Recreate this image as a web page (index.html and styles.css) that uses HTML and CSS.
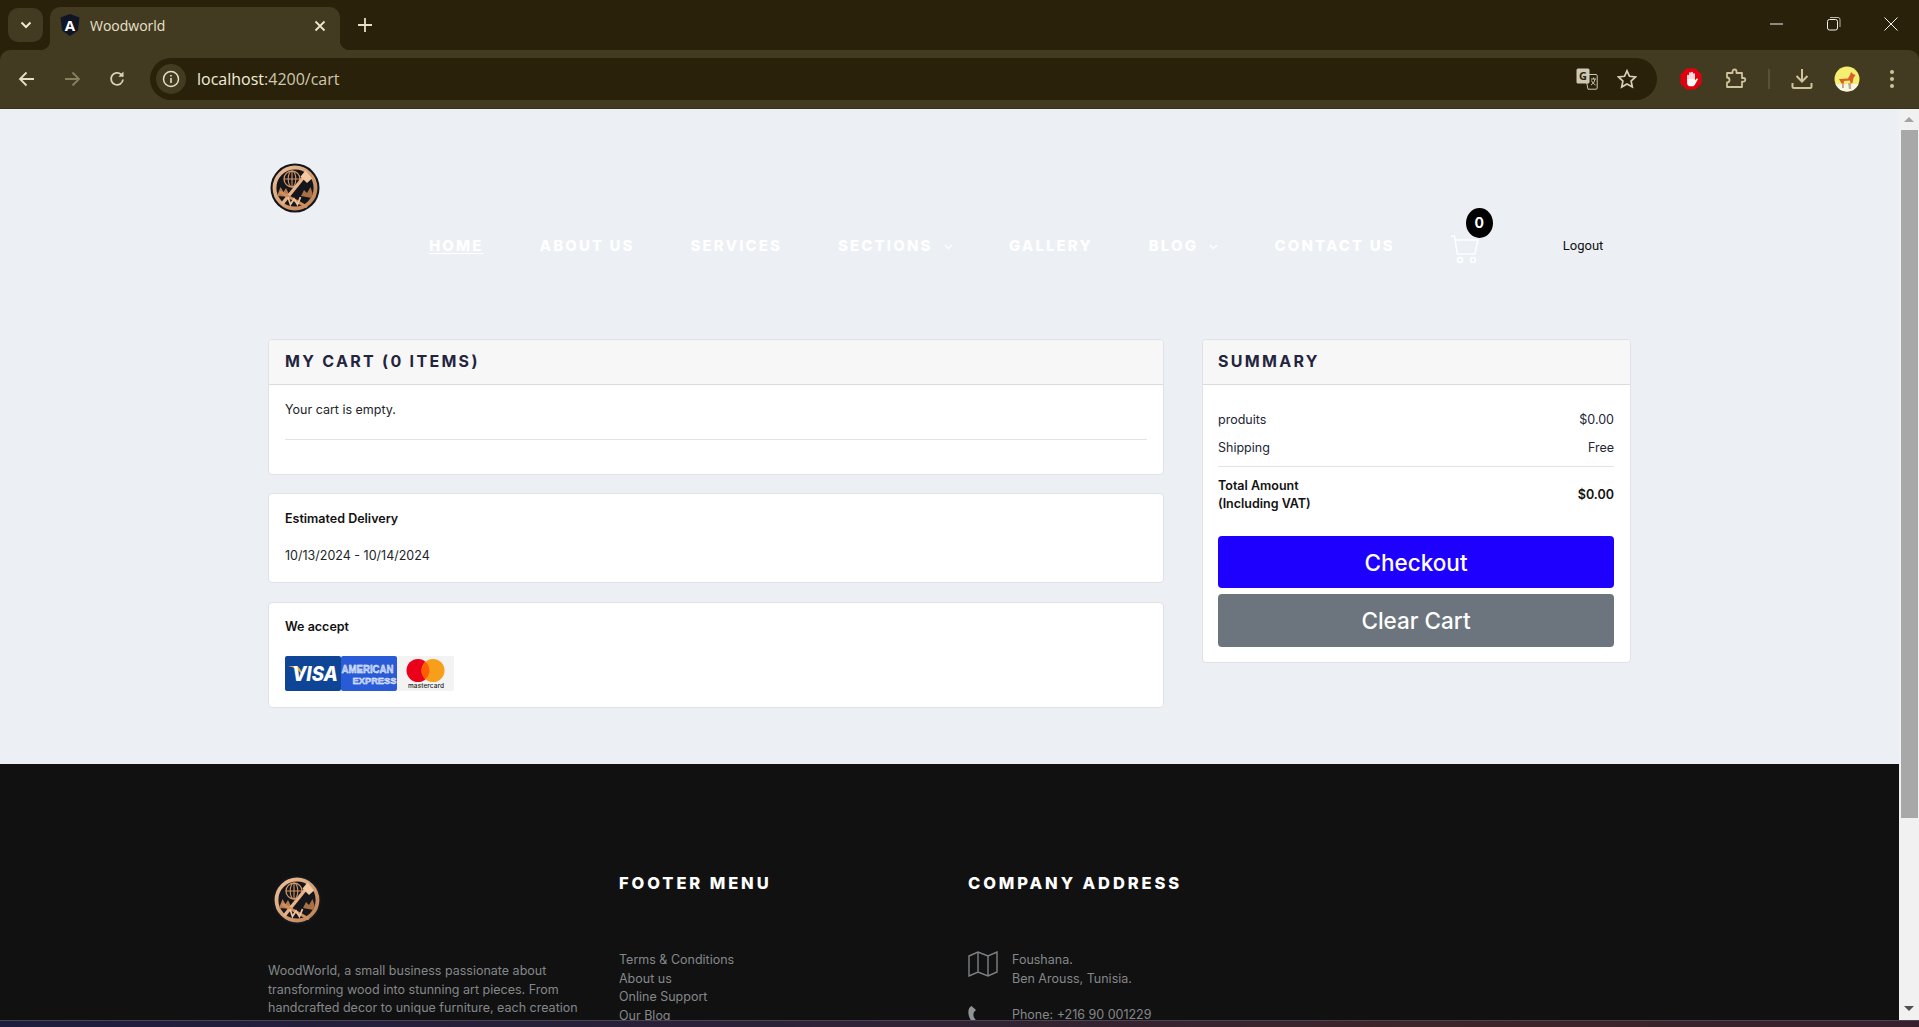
FILE: index.html
```html
<!DOCTYPE html>
<html lang="en">
	<head>
		<meta charset="UTF-8">
		<title>Woodworld</title>
		<link rel="stylesheet" href="styles.css">
	</head>
	<body>
		<svg class="defs" width="0" height="0">
			<defs>
				<linearGradient id="copper" x1="0" y1="0" x2="1" y2="1">
					<stop offset="0" stop-color="#eec29a"/>
					<stop offset="1" stop-color="#bd8052"/>
				</linearGradient>
			</defs>
			<symbol id="logo" viewBox="0 0 50 50">
				<circle cx="25" cy="25" r="24.500" fill="#15151c"/>
				<circle cx="25" cy="25" r="20.500" fill="none" stroke="url(#copper)" stroke-width="3.800"/>
				<circle cx="22" cy="16" r="8" fill="none" stroke="#cf9566" stroke-width="1.300"/>
				<ellipse cx="22" cy="16" rx="3.800" ry="8" fill="none" stroke="#cf9566" stroke-width="1.100"/>
				<path d="M14 16h16M22 8v16" stroke="#cf9566" stroke-width="1.100"/>
				<path d="M7 33l3.500-9 3 5 2.500-4 3 6 1 3z" fill="#b67c50"/>
				<path d="M31 33l3-6 3 3 3.500-6 2 6-1 5z" fill="#a96f45"/>
				<path d="M12 41L33 15" stroke="#e8b288" stroke-width="3.400"/>
				<path d="M30.500 13.500l5-6 6.500 8-5 4.500z" fill="#f2c9a3"/>
				<path d="M10 29l27 15" stroke="#cf9060" stroke-width="3"/>
				<path d="M18 34l2.500 7.500 3.500-5.500 3.500 5.500 3-7.500" fill="none" stroke="#f0c098" stroke-width="1.800"/>
			</symbol>
		</svg>

		<!-- barre du navigateur -->
		<div class="tabstrip">
			<div class="tab-menu">
				<svg width="12" height="8" viewBox="0 0 12 8"><path d="M1.500 1.500L6 6l4.500-4.500" fill="none" stroke="#eee6cf" stroke-width="2"/></svg>
			</div>
			<div class="tab">
				<svg class="favicon" width="20" height="22" viewBox="0 0 20 22">
					<path d="M10 0l9.500 3.400-1.500 13L10 22l-8-5.600L.5 3.400z" fill="#0f1524"/>
					<text x="10" y="16.500" text-anchor="middle" class="favicon-letter">A</text>
				</svg>
				<span class="tab-title">Woodworld</span>
				<svg class="tab-close" width="12" height="12" viewBox="0 0 12 12"><path d="M1.500 1.500l9 9M10.500 1.500l-9 9" stroke="#eee6cf" stroke-width="1.800"/></svg>
			</div>
			<svg class="tab-new" width="14" height="14" viewBox="0 0 14 14"><path d="M7 0v14M0 7h14" stroke="#e6dfc6" stroke-width="1.800"/></svg>
			<div class="window-btns">
				<svg width="14" height="14" viewBox="0 0 14 14"><path d="M0 7h13" stroke="#f2f2f2" stroke-width="1"/></svg>
				<svg width="14" height="14" viewBox="0 0 14 14"><rect x=".5" y="2.500" width="10" height="10.500" rx="2" fill="none" stroke="#f2f2f2"/><path d="M3 .5h8a2 2 0 0 1 2 2V10" fill="none" stroke="#bdb8a6"/></svg>
				<svg width="14" height="14" viewBox="0 0 14 14"><path d="M.5.5l13 13M13.500.5l-13 13" stroke="#f2f2f2" stroke-width="1"/></svg>
			</div>
		</div>
		<div class="toolbar">
			<svg class="tool-btn" width="18" height="16" viewBox="0 0 18 16"><path d="M16 8H2M8.500 1.500L2 8l6.500 6.500" fill="none" stroke="#e6dfc6" stroke-width="1.800"/></svg>
			<svg class="tool-btn" width="18" height="16" viewBox="0 0 18 16"><path d="M2 8h14M9.500 1.500L16 8l-6.500 6.500" fill="none" stroke="#86805f" stroke-width="1.800"/></svg>
			<svg class="tool-btn" width="18" height="18" viewBox="0 0 18 18"><path d="M15 9.500a6 6 0 1 1-1.800-5L15 6" fill="none" stroke="#d8d1b6" stroke-width="1.800"/><path d="M15.500 1.500v5.200h-5.200z" fill="#d8d1b6"/></svg>
			<div class="omnibox">
				<div class="site-chip">
					<svg width="18" height="18" viewBox="0 0 18 18"><circle cx="9" cy="9" r="7.500" fill="none" stroke="#e6dfc6" stroke-width="1.500"/><path d="M9 8v5M9 5v1.600" stroke="#e6dfc6" stroke-width="1.600"/></svg>
				</div>
				<span class="url"><span class="url-host">localhost</span>:4200/cart</span>
				<svg class="omni-translate" width="22" height="22" viewBox="0 0 22 22">
					<path d="M9 6.500h11a1.200 1.200 0 0 1 1.200 1.200V20a1.200 1.200 0 0 1-1.200 1.200H12L9 6.500z" fill="#292109" stroke="#cfc8b2"/>
					<rect x="0.500" y="0.500" width="13" height="15" rx="1.500" fill="#cfc8b2"/>
					<text x="7" y="12" text-anchor="middle" class="translate-letter">G</text>
					<path d="M15 11h5M17.500 9.500V11M19 11c-.5 3-2 5-4 6M15.500 12.500c1 2 2 3.500 4 4.500" fill="none" stroke="#cfc8b2"/>
				</svg>
				<svg class="omni-star" width="20" height="20" viewBox="0 0 20 20"><path d="M10 1.800l2.500 5.500 6 .7-4.400 4 1.200 5.900L10 15l-5.300 3 1.200-6-4.400-4 6-.7z" fill="none" stroke="#d8d1b6" stroke-width="1.700"/></svg>
			</div>
			<div class="ext-icons">
				<svg class="ext-block" width="22" height="22" viewBox="0 0 22 22">
					<path d="M6.500.5h9l6 6v9l-6 6h-9l-6-6v-9z" fill="#e3000f"/>
					<path d="M8 7.500V12M10 5v6M12 4.500V11M14 6v6" stroke="#fff" stroke-width="1.700" stroke-linecap="round"/>
					<path d="M7.100 11h7.800v1.500l1.500-1.700c.7-.7 1.800 0 1.300.9l-3 5.300c-.6.900-1.300 1.300-2.400 1.300h-2.300c-1.800 0-2.900-1.300-2.900-3.200z" fill="#fff"/>
				</svg>
				<svg width="22" height="22" viewBox="0 0 22 22"><path d="M2 5h5.500V3.500a2 2 0 0 1 4 0V5H17v5h1.500a1.800 1.800 0 0 1 0 3.600H17V19H2v-4.500a2.500 2.500 0 0 0 0-5z" fill="none" stroke="#cfc39c" stroke-width="1.800" stroke-linejoin="round"/></svg>
				<span class="tool-sep"></span>
				<svg width="22" height="22" viewBox="0 0 22 22"><path d="M11 1v12M5.500 8l5.500 5.500L16.500 8M1.500 15v3.500a1.500 1.500 0 0 0 1.500 1.500h16a1.500 1.500 0 0 0 1.500-1.500V15" fill="none" stroke="#cfc39c" stroke-width="2"/></svg>
				<svg width="26" height="26" viewBox="0 0 26 26">
					<circle cx="13" cy="13" r="12.500" fill="#f5ee71"/>
					<path d="M1.500 18h23a12.500 12.500 0 0 1-23 0z" fill="#f7f5e4"/>
					<path d="M5 13l9-.5 2-3.500 1-3 2 2 2.500 1-2 3-1 5-2 .5-.5-3-6 .5-.5 3-2-.5z" fill="#d8612a"/>
					<path d="M14 17h3v6h-2zM8 18h2v4H8z" fill="#c8a887"/>
				</svg>
				<svg class="ext-menu" width="6" height="20" viewBox="0 0 6 20"><circle cx="3" cy="3" r="2" fill="#cfc39c"/><circle cx="3" cy="10" r="2" fill="#cfc39c"/><circle cx="3" cy="17" r="2" fill="#cfc39c"/></svg>
			</div>
		</div>

		<div class="viewport">
			<div class="page">
				<header class="site-head">
					<svg class="logo" width="50" height="50"><use href="#logo"/></svg>
					<nav class="nav">
						<a class="nav-link current">HOME</a>
						<a class="nav-link">ABOUT US</a>
						<a class="nav-link">SERVICES</a>
						<a class="nav-link">SECTIONS
							<svg class="chev" width="9" height="6" viewBox="0 0 9 6"><path d="M1 1l3.500 3.500L8 1" fill="none" stroke="#fff" stroke-width="1.400"/></svg>
						</a>
						<a class="nav-link">GALLERY</a>
						<a class="nav-link">BLOG
							<svg class="chev" width="9" height="6" viewBox="0 0 9 6"><path d="M1 1l3.500 3.500L8 1" fill="none" stroke="#fff" stroke-width="1.400"/></svg>
						</a>
						<a class="nav-link">CONTACT US</a>
						<div class="cart-link">
							<svg width="29" height="28" viewBox="0 0 29 28">
								<path d="M0 1h3.500l2.800 18h17.500L27 5H4" fill="none" stroke="#fff" stroke-width="1.500"/>
								<circle cx="9" cy="25" r="2.500" fill="none" stroke="#fff" stroke-width="1.500"/>
								<circle cx="22" cy="25" r="2.500" fill="none" stroke="#fff" stroke-width="1.500"/>
							</svg>
							<span class="cart-badge">0</span>
						</div>
						<a class="logout">Logout</a>
					</nav>
				</header>

				<main class="cart-page">
					<div class="col">
						<section class="card">
							<h2 class="card-head">MY CART (0 ITEMS)</h2>
							<div class="card-body cart-items">
								<p>Your cart is empty.</p>
								<hr class="line">
							</div>
						</section>
						<section class="card delivery">
							<h3>Estimated Delivery</h3>
							<p>10/13/2024 - 10/14/2024</p>
						</section>
						<section class="card accept">
							<h3>We accept</h3>
							<div class="pay-cards">
								<svg width="56" height="35" viewBox="0 0 56 35">
									<rect width="56" height="35" rx="2" fill="#0f4596"/>
									<path d="M3 10h8q5 1 6 9q-4-7-14-9z" fill="#f0ae2e"/>
									<text x="7" y="25" class="visa-text" textLength="46" lengthAdjust="spacingAndGlyphs">VISA</text>
								</svg>
								<svg width="56" height="35" viewBox="0 0 56 35">
									<rect width="56" height="35" rx="2" fill="#2a5bd7"/>
									<text x="0.500" y="16.500" class="amex-text" textLength="52" lengthAdjust="spacingAndGlyphs">AMERICAN</text>
									<text x="11.500" y="27.500" class="amex-text amex-small" textLength="44" lengthAdjust="spacingAndGlyphs">EXPRESS</text>
								</svg>
								<svg width="57" height="35" viewBox="0 0 57 35">
									<rect width="57" height="35" rx="2" fill="#f3f3f3"/>
									<circle cx="21" cy="14.500" r="11.500" fill="#eb001b"/>
									<circle cx="36" cy="14.500" r="11.500" fill="#f79e1b"/>
									<path d="M28.500 5.800a11.500 11.500 0 0 1 0 17.400a11.500 11.500 0 0 1 0-17.400z" fill="#ff5f00"/>
									<text x="11" y="32" class="mc-text" textLength="36">mastercard</text>
								</svg>
							</div>
						</section>
					</div>
					<aside class="card summary">
						<h2 class="card-head">SUMMARY</h2>
						<div class="card-body summary-body">
							<div class="sum-row"><span>produits</span><span>$0.00</span></div>
							<div class="sum-row"><span>Shipping</span><span>Free</span></div>
							<hr class="line">
							<div class="sum-row total">
								<span>Total Amount<br>(Including VAT)</span>
								<span>$0.00</span>
							</div>
							<button class="btn btn-blue">Checkout</button>
							<button class="btn btn-grey">Clear Cart</button>
						</div>
					</aside>
				</main>

				<footer class="site-foot">
					<div class="foot-inner">
						<div class="foot-about">
							<svg class="foot-logo" width="50" height="50"><use href="#logo"/></svg>
							<p>WoodWorld, a small business passionate about transforming wood into stunning art pieces. From handcrafted decor to unique furniture, each creation tells a story.</p>
						</div>
						<div class="foot-menu">
							<h4>FOOTER MENU</h4>
							<ul>
								<li>Terms &amp; Conditions</li>
								<li>About us</li>
								<li>Online Support</li>
								<li>Our Blog</li>
							</ul>
						</div>
						<div class="foot-address">
							<h4>COMPANY ADDRESS</h4>
							<div class="addr-row">
								<svg width="30" height="26" viewBox="0 0 30 26"><path d="M1 5l9-4 10 4 9-4v20l-9 4-10-4-9 4zM10 1v20M20 5v20" fill="none" stroke="#7d8285" stroke-width="1.400"/></svg>
								<span>Foushana.<br>Ben Arouss, Tunisia.</span>
							</div>
							<div class="addr-row">
								<svg width="30" height="26" viewBox="0 0 30 26"><path d="M3.500 0C1 1 0 4 .5 8s3 8 6 10l2-3-2.500-3.500c-.8-2-.8-3.500 0-5.500l2-2z" fill="#8f9496"/></svg>
								<span>Phone: +216 90 001229</span>
							</div>
						</div>
					</div>
				</footer>
			</div>
			<div class="scrollbar">
				<span class="sb-up"></span>
				<span class="sb-thumb"></span>
				<span class="sb-down"></span>
			</div>
		</div>
		<div class="taskbar-edge"></div>
	</body>
</html>
```

FILE: styles.css
```css
* {
	margin: 0;
	padding: 0;
	box-sizing: border-box;
}
html, body {
	height: 100%;
	overflow: hidden;
}
body {
	display: flex;
	flex-direction: column;
	font-family: "Inter", "Liberation Sans", sans-serif;
	font-size: 12.500px;
	color: #212529;
	background: #292109;
}
.defs {
	position: absolute;
}

/* browser */
.tabstrip {
	height: 50px;
	flex: none;
	display: flex;
	align-items: flex-start;
	background: #292109;
	font-family: "Open Sans", "Liberation Sans", sans-serif;
}
.tab-menu {
	width: 35px;
	height: 34px;
	margin: 8px 0 0 8px;
	background: #423a21;
	border-radius: 10px;
	display: flex;
	align-items: center;
	justify-content: center;
}
.tab {
	width: 290px;
	height: 43px;
	margin: 7px 0 0 7px;
	padding: 0 14px 0 10px;
	background: #423a21;
	border-radius: 10px 10px 0 0;
	display: flex;
	align-items: center;
	position: relative;
}
.tab::before, .tab::after {
	content: "";
	position: absolute;
	bottom: 0;
	width: 10px;
	height: 10px;
}
.tab::before {
	left: -10px;
	background: radial-gradient(circle at 0 0, transparent 10px, #423a21 10.500px);
}
.tab::after {
	right: -10px;
	background: radial-gradient(circle at 100% 0, transparent 10px, #423a21 10.500px);
}
.favicon {
	margin-top: -8px;
}
.favicon-letter {
	font: 700 15px "Open Sans", sans-serif;
	fill: #fff;
}
.translate-letter {
	font: 700 11px "Open Sans", sans-serif;
	fill: #292109;
}
.tab-title {
	margin: -6px 0 0 10px;
	flex: 1;
	font-size: 14px;
	color: #e8e2cc;
}
.tab-close {
	margin: -6px 0 0 0;
}
.tab-new {
	margin: 18px 0 0 18px;
}
.window-btns {
	margin: 17px 21px 0 auto;
	display: flex;
	gap: 43px;
}
.toolbar {
	height: 59px;
	flex: none;
	display: flex;
	align-items: center;
	background: #423a21;
	border-radius: 10px 10px 0 0;
	border-bottom: 1px solid #3a3322;
	position: relative;
	padding-left: 18px;
	font-family: "Open Sans", "Liberation Sans", sans-serif;
}
.tool-btn {
	margin-right: 27px;
	flex: none;
}
.tool-btn:nth-child(3) {
	margin-right: 24px;
}
.omnibox {
	width: 1507px;
	height: 42px;
	flex: none;
	margin-top: -1px;
	background: #292109;
	border-radius: 21px;
	display: flex;
	align-items: center;
	padding-left: 6px;
}
.site-chip {
	width: 30px;
	height: 30px;
	border-radius: 50%;
	background: #423a21;
	display: flex;
	align-items: center;
	justify-content: center;
}
.url {
	margin-left: 11px;
	font-size: 16px;
	color: #cfc8ac;
	flex: 1;
}
.url-host {
	color: #f2edda;
}
.omni-translate {
	margin-right: 19px;
}
.omni-star {
	margin-right: 20px;
}
.ext-icons {
	display: flex;
	align-items: center;
	margin-left: 23px;
	gap: 21px;
}
.ext-block {
	margin-right: 2px;
}
.ext-menu {
	margin-left: 8px;
}
.tool-sep {
	width: 2px;
	height: 20px;
	background: #5b5234;
}

/* page */
.viewport {
	flex: 1;
	min-height: 0;
	display: flex;
}
.page {
	flex: 1;
	min-width: 0;
	overflow: hidden;
	background: #eceff4;
}
.scrollbar {
	width: 20px;
	flex: none;
	background: #f1f1f1;
	display: flex;
	flex-direction: column;
	align-items: center;
}
.sb-up {
	width: 0;
	height: 0;
	margin-top: 8px;
	border: 5px solid transparent;
	border-top: 0;
	border-bottom-color: #a3a3a3;
}
.sb-thumb {
	width: 17px;
	height: 688px;
	margin: 8px 0 0 1px;
	background: #a8a8a8;
}
.sb-down {
	width: 0;
	height: 0;
	margin-top: 188px;
	border: 5px solid transparent;
	border-bottom: 0;
	border-top-color: #505050;
}
.taskbar-edge {
	height: 7px;
	flex: none;
	border-top: 1px solid #4b4452;
	background: linear-gradient(90deg, #1d1d3d 0%, #2c2238 40%, #3e2528 75%, #37202c 100%);
}
.site-head {
	width: 1363px;
	margin: 0 auto;
	padding-top: 54px;
}
.logo {
	display: block;
	margin-left: 2px;
}
.nav {
	height: 40px;
	margin-top: 12px;
	padding-left: 161px;
	display: flex;
	align-items: center;
	gap: 56px;
}
.nav-link {
	font-size: 15px;
	font-weight: 800;
	letter-spacing: 2.100px;
	color: #fff;
	white-space: nowrap;
}
.nav-link.current {
	text-decoration: underline;
	text-decoration-thickness: 1px;
	text-underline-offset: 2px;
}
.chev {
	margin-left: 6px;
	vertical-align: 1px;
}
.cart-link {
	position: relative;
	width: 29px;
	height: 28px;
	margin: 8px 0 0 0;
}
.cart-badge {
	position: absolute;
	left: 15px;
	top: -27px;
	width: 27px;
	height: 30px;
	border-radius: 50%;
	background: #000;
	color: #fff;
	font-size: 14px;
	font-weight: 700;
	line-height: 30px;
	text-align: center;
}
.logout {
	margin-left: 27px;
	font-family: "Roboto", "Inter", sans-serif;
	font-size: 13px;
	color: #111;
}
.cart-page {
	width: 1363px;
	margin: 0 auto;
	padding-top: 74px;
	display: flex;
	gap: 38px;
	align-items: flex-start;
}
.col {
	width: 896px;
	flex: none;
	display: flex;
	flex-direction: column;
	gap: 18px;
}
.card {
	background: #fff;
	border: 1px solid #dfe1e6;
	border-radius: 4px;
}
.card-head {
	height: 45px;
	padding: 0 16px;
	background: #f7f7f8;
	border-bottom: 1px solid #dadbdf;
	border-radius: 4px 4px 0 0;
	font-size: 16px;
	font-weight: 700;
	letter-spacing: 2.300px;
	line-height: 43px;
	color: #24243e;
}
.card-body {
	padding: 0 16px;
}
.cart-items {
	height: 89px;
	padding-top: 16px;
}
.cart-items p {
	line-height: 18px;
}
.line {
	border: 0;
	border-top: 1px solid #e2e3e6;
}
.cart-items .line {
	margin-top: 20px;
}
.delivery {
	height: 90px;
	padding: 16px;
}
.delivery h3, .accept h3 {
	font-size: 12.500px;
	font-weight: 600;
	line-height: 18px;
	color: #111;
}
.delivery p {
	margin-top: 19px;
	line-height: 18px;
}
.accept {
	height: 106px;
	margin-top: 1px;
	padding: 15px 16px;
}
.pay-cards {
	margin-top: 20px;
	display: flex;
}
.visa-text {
	font: italic 800 20px "Inter", sans-serif;
	fill: #fff;
}
.amex-text {
	font: 700 10px "Liberation Sans", sans-serif;
	fill: #9db8f3;
	stroke: #fff;
	stroke-width: .4px;
}
.amex-small {
	font-size: 9.500px;
}
.mc-text {
	font: 500 6.500px "Inter", sans-serif;
	fill: #222;
}
.summary {
	width: 429px;
	flex: none;
	height: 324px;
}
.summary .card-head {
	padding-left: 15px;
}
.summary-body {
	padding: 20px 16px 0 15px;
}
.sum-row {
	display: flex;
	justify-content: space-between;
	align-items: center;
	height: 28px;
	color: #212535;
}
.summary-body .line {
	margin-top: 5px;
}
.sum-row.total {
	height: 50px;
	margin-top: 3px;
	font-weight: 600;
	line-height: 18px;
	color: #111;
}
.btn {
	display: block;
	width: 100%;
	border: 0;
	border-radius: 4px;
	color: #fff;
	font-family: "Inter", sans-serif;
	font-size: 22.500px;
	font-weight: 500;
}
.btn-blue {
	height: 52px;
	margin-top: 16px;
	background: #1e00ff;
}
.btn-grey {
	height: 53px;
	margin-top: 6px;
	background: #6c757d;
}
.site-foot {
	margin-top: 56px;
	height: 400px;
	background: #111;
	color: #84888b;
}
.foot-inner {
	width: 1363px;
	margin: 0 auto;
	padding-top: 111px;
	display: flex;
}
.foot-about {
	width: 351px;
	flex: none;
}
.foot-logo {
	display: block;
	margin-left: 4px;
}
.foot-about p {
	width: 320px;
	margin-top: 37px;
	line-height: 18.500px;
}
.foot-menu {
	width: 349px;
	flex: none;
}
.site-foot h4 {
	margin-top: -2px;
	font-size: 16.500px;
	font-weight: 800;
	letter-spacing: 2.900px;
	line-height: 20px;
	color: #fff;
}
.foot-menu ul {
	list-style: none;
	margin-top: 58px;
}
.foot-menu li {
	line-height: 18.500px;
}
.addr-row {
	display: flex;
	gap: 14px;
	line-height: 18.500px;
}
.foot-address h4 + .addr-row {
	margin-top: 58px;
	height: 55px;
}
```
